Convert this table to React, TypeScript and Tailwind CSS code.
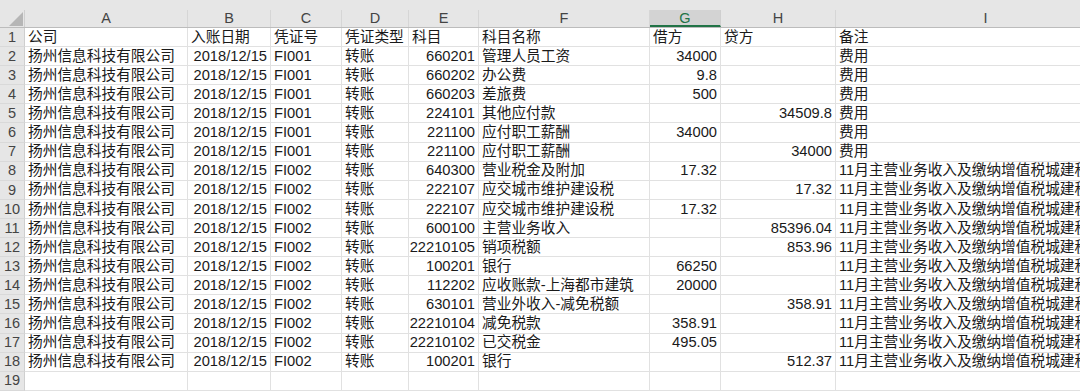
import React from "react";

const cols = [
  { key: "A", w: "w-[163px]" },
  { key: "B", w: "w-[83px]" },
  { key: "C", w: "w-[71px]" },
  { key: "D", w: "w-[67px]" },
  { key: "E", w: "w-[70px]" },
  { key: "F", w: "w-[171px]" },
  { key: "G", w: "w-[71px]" },
  { key: "H", w: "w-[115px]" },
  { key: "I", w: "w-[300px]" },
];

const align = ["l", "r", "l", "l", "r", "l", "r", "r", "l"];

const C = "扬州信息科技有限公司";
const D = "2018/12/15";
const N = "11月主营业务收入及缴纳增值税城建税及教育费附加";

const rows: string[][] = [
  ["公司", "入账日期", "凭证号", "凭证类型", "科目", "科目名称", "借方", "贷方", "备注"],
  [C, D, "FI001", "转账", "660201", "管理人员工资", "34000", "", "费用"],
  [C, D, "FI001", "转账", "660202", "办公费", "9.8", "", "费用"],
  [C, D, "FI001", "转账", "660203", "差旅费", "500", "", "费用"],
  [C, D, "FI001", "转账", "224101", "其他应付款", "", "34509.8", "费用"],
  [C, D, "FI001", "转账", "221100", "应付职工薪酬", "34000", "", "费用"],
  [C, D, "FI001", "转账", "221100", "应付职工薪酬", "", "34000", "费用"],
  [C, D, "FI002", "转账", "640300", "营业税金及附加", "17.32", "", N],
  [C, D, "FI002", "转账", "222107", "应交城市维护建设税", "", "17.32", N],
  [C, D, "FI002", "转账", "222107", "应交城市维护建设税", "17.32", "", N],
  [C, D, "FI002", "转账", "600100", "主营业务收入", "", "85396.04", N],
  [C, D, "FI002", "转账", "22210105", "销项税额", "", "853.96", N],
  [C, D, "FI002", "转账", "100201", "银行", "66250", "", N],
  [C, D, "FI002", "转账", "112202", "应收账款-上海都市建筑", "20000", "", N],
  [C, D, "FI002", "转账", "630101", "营业外收入-减免税额", "", "358.91", N],
  [C, D, "FI002", "转账", "22210104", "减免税款", "358.91", "", N],
  [C, D, "FI002", "转账", "22210102", "已交税金", "495.05", "", N],
  [C, D, "FI002", "转账", "100201", "银行", "", "512.37", N],
  ["", "", "", "", "", "", "", "", ""],
];

export default function App() {
  return (
    <div
      className="w-[1080px] h-[391px] overflow-hidden bg-white text-[#1a1a1a]"
      style={{ fontFamily: '"Liberation Sans", "Noto Sans CJK SC", sans-serif' }}
    >
      <div className="h-[10px] bg-[#e6e6e6]" />
      {/* column header */}
      <div className="flex h-[18px] bg-[#e6e6e6] border-b border-[#bcbcbc]">
        <div className="w-[25px] shrink-0 relative border-r border-[#cfcfcf]">
          <svg className="absolute left-[9px] top-[2px]" width="14" height="14" viewBox="0 0 14 14">
            <polygon points="14,0 14,14 0,14" fill="#b6b6b6" />
          </svg>
        </div>
        {cols.map((c) => (
          <div
            key={c.key}
            className={`${c.w} shrink-0 flex items-center justify-center text-[14.5px] leading-none ${
              c.key === "G"
                ? "bg-[#d3d3d3] text-[#217346] border-b-2 border-[#217346] border-r border-r-[#cfcfcf]"
                : "text-[#444] border-r border-[#d6d6d6]"
            }`}
          >
            <span className={c.key === "G" ? "mt-[2px]" : ""}>{c.key}</span>
          </div>
        ))}
      </div>
      {rows.map((r, i) => (
        <div key={i} className="flex h-[19.1px]">
          <div className="w-[25px] shrink-0 bg-[#e6e6e6] border-r border-[#cfcfcf] border-b border-b-[#d9d9d9] flex items-center justify-center text-[14.5px] text-[#444] leading-none">
            {i + 1}
          </div>
          {cols.map((c, j) => (
            <div
              key={c.key}
              className={`${c.w} shrink-0 border-r border-b border-[#e1e1e1] flex items-center overflow-visible whitespace-nowrap text-[14.7px] leading-none ${
                align[j] === "r" && i > 0 ? "justify-end pr-[3px]" : "justify-start pl-[3px]"
              }`}
            >
              {r[j]}
            </div>
          ))}
        </div>
      ))}
    </div>
  );
}
